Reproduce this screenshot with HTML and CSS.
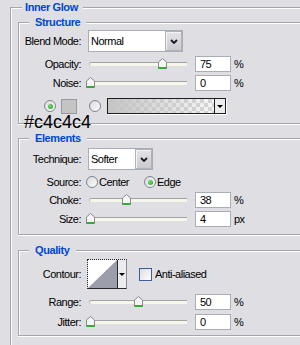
FILE: index.html
```html
<!DOCTYPE html>
<html>
<head>
<meta charset="utf-8">
<link rel="stylesheet" href="styles.css">
</head>
<body>
<fieldset class="group outer">
  <legend class="title title-outer">Inner Glow</legend>

  <fieldset class="group sub sub-structure">
    <legend class="title">Structure</legend>
    <div class="row r-combo">
      <span class="label">Blend Mode:</span>
      <div class="combo combo-blend">
        <span class="combo-text">Normal</span>
        <span class="combo-btn"><svg width="8" height="5" viewBox="0 0 8 5"><path d="M1 1 L4 4 L7 1" fill="none" stroke="#1a1a1a" stroke-width="1.8"/></svg></span>
      </div>
    </div>
    <div class="row r-slider gap4">
      <span class="label">Opacity:</span>
      <div class="slider" style="--v:75">
        <span class="track"></span>
        <svg class="thumb" viewBox="0 0 9 11" width="9" height="11"><path d="M4.5 0.5 L8.5 4 V10.5 H0.5 V4 Z" fill="#f5f5f5" stroke="#8a8a8a"/><rect x="0.5" y="9" width="8" height="2" fill="#35ad35"/></svg>
      </div>
      <span class="num">75</span><span class="unit">%</span>
    </div>
    <div class="row r-slider gap3">
      <span class="label">Noise:</span>
      <div class="slider" style="--v:0">
        <span class="track"></span>
        <svg class="thumb" viewBox="0 0 9 11" width="9" height="11"><path d="M4.5 0.5 L8.5 4 V10.5 H0.5 V4 Z" fill="#f5f5f5" stroke="#8a8a8a"/><rect x="0.5" y="9" width="8" height="2" fill="#35ad35"/></svg>
      </div>
      <span class="num">0</span><span class="unit">%</span>
    </div>
    <div class="r-color">
      <span class="radio on"></span>
      <span class="swatch"></span>
      <span class="radio radio-grad"></span>
      <div class="gradpick">
        <span class="grad"></span>
        <span class="gradarrow"><span class="tri"></span></span>
      </div>
    </div>
  </fieldset>

  <fieldset class="group sub sub-elements">
    <legend class="title">Elements</legend>
    <div class="row r-combo">
      <span class="label">Technique:</span>
      <div class="combo combo-tech">
        <span class="combo-text">Softer</span>
        <span class="combo-btn"><svg width="8" height="5" viewBox="0 0 8 5"><path d="M1 1 L4 4 L7 1" fill="none" stroke="#1a1a1a" stroke-width="1.8"/></svg></span>
      </div>
    </div>
    <div class="row r-source">
      <span class="label">Source:</span>
      <label class="choice choice-center"><span class="radio"></span><span class="choice-text">Center</span></label>
      <label class="choice choice-edge"><span class="radio on"></span><span class="choice-text">Edge</span></label>
    </div>
    <div class="row r-slider gap3">
      <span class="label">Choke:</span>
      <div class="slider" style="--v:38">
        <span class="track"></span>
        <svg class="thumb" viewBox="0 0 9 11" width="9" height="11"><path d="M4.5 0.5 L8.5 4 V10.5 H0.5 V4 Z" fill="#f5f5f5" stroke="#8a8a8a"/><rect x="0.5" y="9" width="8" height="2" fill="#35ad35"/></svg>
      </div>
      <span class="num">38</span><span class="unit">%</span>
    </div>
    <div class="row r-slider gap3">
      <span class="label">Size:</span>
      <div class="slider" style="--v:0">
        <span class="track"></span>
        <svg class="thumb" viewBox="0 0 9 11" width="9" height="11"><path d="M4.5 0.5 L8.5 4 V10.5 H0.5 V4 Z" fill="#f5f5f5" stroke="#8a8a8a"/><rect x="0.5" y="9" width="8" height="2" fill="#35ad35"/></svg>
      </div>
      <span class="num">4</span><span class="unit">px</span>
    </div>
  </fieldset>

  <fieldset class="group sub sub-quality">
    <legend class="title">Quality</legend>
    <div class="row r-contour">
      <span class="label">Contour:</span>
      <div class="contour">
        <svg class="contour-prev" width="29" height="28" viewBox="0 0 29 28"><rect width="29" height="28" fill="#ffffff"/><polygon points="0,28 29,0 29,28" fill="#9c9fab"/></svg>
        <span class="contour-arrow"><span class="tri"></span></span>
      </div>
      <span class="check"></span>
      <span class="check-text">Anti-aliased</span>
    </div>
    <div class="row r-slider gap5">
      <span class="label">Range:</span>
      <div class="slider" style="--v:50">
        <span class="track"></span>
        <svg class="thumb" viewBox="0 0 9 11" width="9" height="11"><path d="M4.5 0.5 L8.5 4 V10.5 H0.5 V4 Z" fill="#f5f5f5" stroke="#8a8a8a"/><rect x="0.5" y="9" width="8" height="2" fill="#35ad35"/></svg>
      </div>
      <span class="num">50</span><span class="unit">%</span>
    </div>
    <div class="row r-slider gap4">
      <span class="label">Jitter:</span>
      <div class="slider" style="--v:0">
        <span class="track"></span>
        <svg class="thumb" viewBox="0 0 9 11" width="9" height="11"><path d="M4.5 0.5 L8.5 4 V10.5 H0.5 V4 Z" fill="#f5f5f5" stroke="#8a8a8a"/><rect x="0.5" y="9" width="8" height="2" fill="#35ad35"/></svg>
      </div>
      <span class="num">0</span><span class="unit">%</span>
    </div>
  </fieldset>
</fieldset>

<div class="hex">#c4c4c4</div>
</body>
</html>
```

FILE: styles.css
```css
* { box-sizing: border-box; }

html, body {
  margin: 0;
  padding: 0;
  width: 300px;
  height: 345px;
  overflow: hidden;
  background: #dfdee3;
}

body {
  position: relative;
  font-family: "Liberation Sans", Arial, sans-serif;
  font-size: 11px;
  letter-spacing: -0.5px;
  color: #000;
}

/* group boxes (cut off by the screenshot at right / bottom) */
.group {
  margin: 0;
  min-inline-size: 0;
  border: 1px solid #a6a5ab;
  border-right: none;
  box-shadow: inset 1px 1px 0 #ffffff, 0 1px 0 #ffffff;
}

.outer {
  margin-left: 10px;
  width: 290px;
  border-bottom: none;
  box-shadow: inset 1px 1px 0 #ffffff;
  padding: 1px 0 9px 7px;
}

.sub { padding: 0; }
.sub-structure { padding: 1px 0 9px 0; }
.sub-elements { margin-top: 7px; padding: 3px 0 7px 0; }
.sub-quality { margin-top: 8px; padding: 2px 0 5px 0; }

.title {
  font-weight: bold;
  color: #0046d5;
  font-size: 11px;
  line-height: 14px;
  letter-spacing: -0.4px;
  padding: 0 6px;
  margin-left: 10px;
  background: #dfdee3;
}

.title-outer {
  margin-left: 4px;
  padding: 0 5px 0 3px;
}

/* rows */
.row {
  display: flex;
  align-items: center;
}

.label {
  flex: none;
  width: 62px;
  margin-right: 7px;
  text-align: right;
  white-space: nowrap;
}

.r-combo { height: 22px; }
.r-slider { height: 16px; }
.gap3 { margin-top: 3px; }
.gap4 { margin-top: 4px; }
.gap5 { margin-top: 5px; }

/* combo box */
.combo {
  flex: none;
  display: flex;
  height: 22px;
  border: 1px solid #a9adb5;
  background: #ffffff;
}
.combo-blend { width: 95px; }
.combo-tech { width: 65px; }

.combo-text {
  flex: 1;
  padding-left: 2px;
  line-height: 20px;
}

.combo-btn {
  flex: none;
  width: 17px;
  display: flex;
  align-items: center;
  justify-content: center;
  border: 1px solid #aeb2bc;
  background: linear-gradient(#e4e4e8, #c9c9d0);
  box-shadow: inset 1px 1px 0 #f4f4f6;
}

/* slider */
.slider {
  position: relative;
  flex: none;
  width: 102px;
  height: 16px;
  margin-left: -2px;
  margin-right: 7px;
  display: flex;
  align-items: center;
}

.track {
  margin-left: 3px;
  width: 98px;
  height: 4px;
  border-top: 1px solid #a3a3a3;
  border-left: 1px solid #b5b5b5;
  border-radius: 2px 0 0 2px;
  background: #f6f6ea;
}

.thumb {
  position: absolute;
  top: 2px;
  left: calc(var(--v) * 0.96px);
}

.num {
  flex: none;
  width: 36px;
  height: 16px;
  border: 1px solid #a9adb5;
  background: #ffffff;
  padding-left: 4px;
  line-height: 14px;
}

.unit { margin-left: 3px; }

/* radio */
.radio {
  flex: none;
  width: 12px;
  height: 12px;
  border-radius: 50%;
  border: 1px solid #7c848e;
  background: linear-gradient(135deg, #d8d8dc, #ffffff);
  display: flex;
  align-items: center;
  justify-content: center;
}

.radio.on::after {
  content: "";
  width: 5px;
  height: 5px;
  border-radius: 50%;
  background: radial-gradient(circle at 40% 40%, #6ee06e, #1c9a1c);
}

/* color row */
.r-color {
  margin-top: 7px;
  height: 16px;
  padding-left: 25px;
  display: flex;
  align-items: center;
}

.swatch {
  flex: none;
  width: 16px;
  height: 15px;
  margin-left: 5px;
  border: 1px solid #9a9a9e;
  background: #c4c4c4;
}

.radio-grad { margin-left: 12px; }

.gradpick {
  flex: none;
  display: flex;
  width: 119px;
  height: 16px;
  margin-left: 6px;
  border: 1px solid #1e1e1e;
  box-shadow: 1px 1px 0 #ffffff;
}

.grad {
  flex: 1;
  background:
    linear-gradient(to right, #c4c4c4 0%, rgba(196, 196, 196, 0) 100%),
    repeating-conic-gradient(#d4d4d4 0 25%, #f6f6f6 0 50%) 0 0 / 8px 8px;
}

.gradarrow {
  flex: none;
  width: 11px;
  border-left: 1px solid #1e1e1e;
  background: #ececee;
  display: flex;
  align-items: center;
  justify-content: center;
}

.tri {
  width: 0;
  height: 0;
  border-left: 3px solid transparent;
  border-right: 3px solid transparent;
  border-top: 3px solid #000;
}

/* source row */
.r-source {
  margin-top: 5px;
  height: 14px;
}

.choice {
  display: flex;
  align-items: center;
}
.choice-center { margin-left: -2px; }
.choice-edge { margin-left: 15px; }
.choice-text { margin-left: 1px; }

/* contour row */
.r-contour { height: 30px; }

.contour {
  flex: none;
  display: flex;
  width: 40px;
  height: 30px;
  margin-left: -1px;
  border: 1px solid #2a2a2a;
  border-top-style: dotted;
  border-left-style: dotted;
  border-right-color: #8a8a90;
}

.contour-prev { display: block; }

.contour-arrow {
  flex: 1;
  border-left: 1px solid #2a2a2a;
  background: #ececee;
  display: flex;
  align-items: center;
  justify-content: center;
}

.check {
  flex: none;
  width: 13px;
  height: 13px;
  margin-left: 12px;
  border: 1px solid #3d5f9e;
  background: linear-gradient(135deg, #dcdcdc, #ffffff);
}

.check-text { margin-left: 3px; }

/* annotation overlay */
.hex {
  position: absolute;
  left: 24px;
  top: 113px;
  font-size: 18px;
  line-height: 18px;
  letter-spacing: 0;
  color: #000;
}
```
